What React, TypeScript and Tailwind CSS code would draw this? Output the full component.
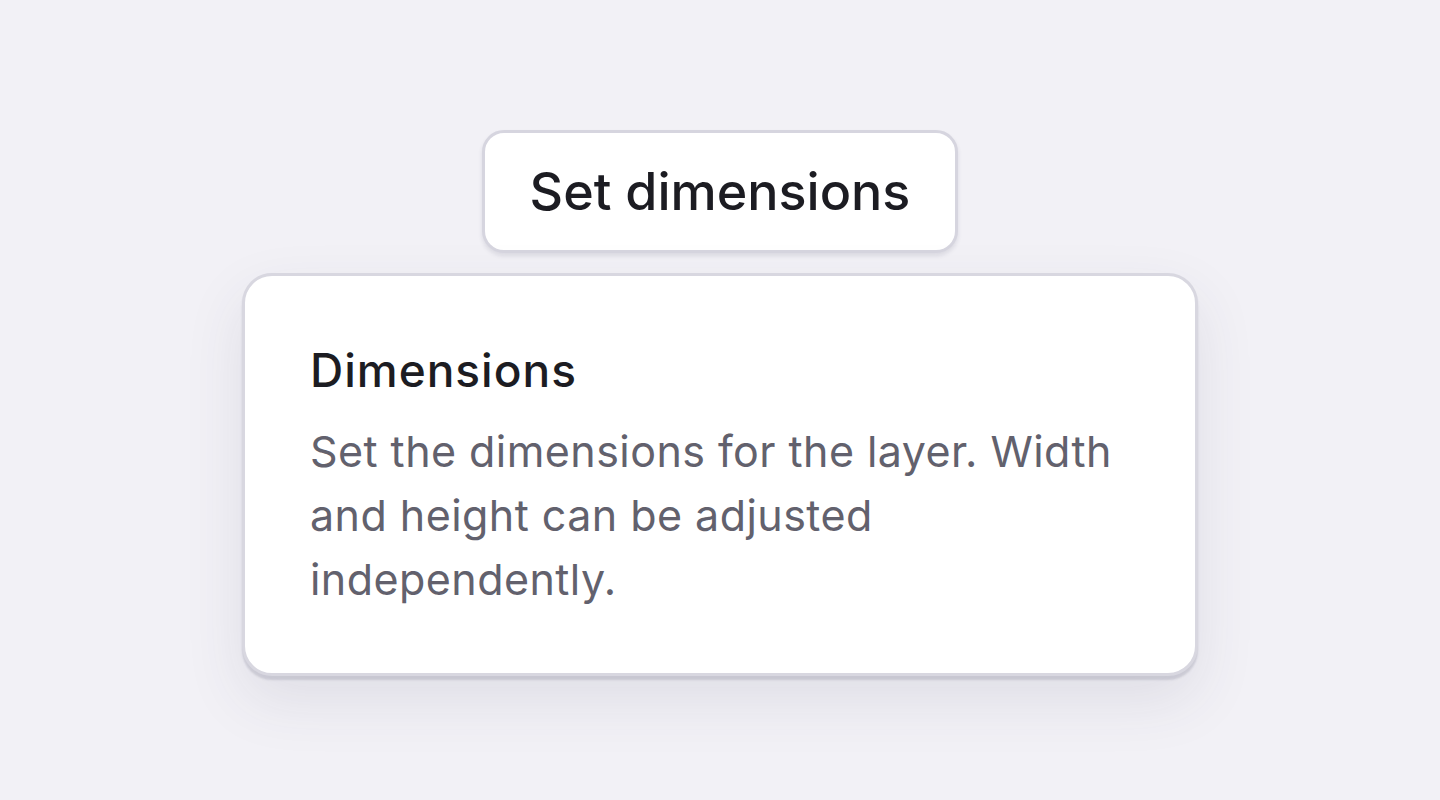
export default function App() {
  return (
    <div
      className="min-h-[800px] w-full bg-[#f2f1f6] flex flex-col items-center pt-[130px] gap-[20px]"
      style={{ fontFamily: "Inter, 'Noto Sans', sans-serif" }}
    >
      <button
        type="button"
        className="h-[123px] w-[476px] rounded-[22px] border-[3px] border-[#d6d5df] bg-white text-[52px] font-medium text-[#1c1c22] shadow-[0_3px_4px_rgba(60,55,90,0.12)]"
      >
        Set dimensions
      </button>

      <div className="w-[956px] rounded-[30px] border-[3px] border-[#d8d7e0] bg-white px-[65px] pt-[64px] pb-[62px] shadow-[0_4px_2px_rgba(80,75,105,0.18),0_24px_60px_rgba(60,55,90,0.10)]">
        <h2 className="text-[46px] leading-[60px] font-medium tracking-[1px] text-[#1c1c22]">Dimensions</h2>
        <p className="mt-[19px] text-[43px] leading-[64px] tracking-[0.45px] text-[#62616d]">
          Set the dimensions for the layer. Width and height can be adjusted independently.
        </p>
      </div>
    </div>
  );
}
